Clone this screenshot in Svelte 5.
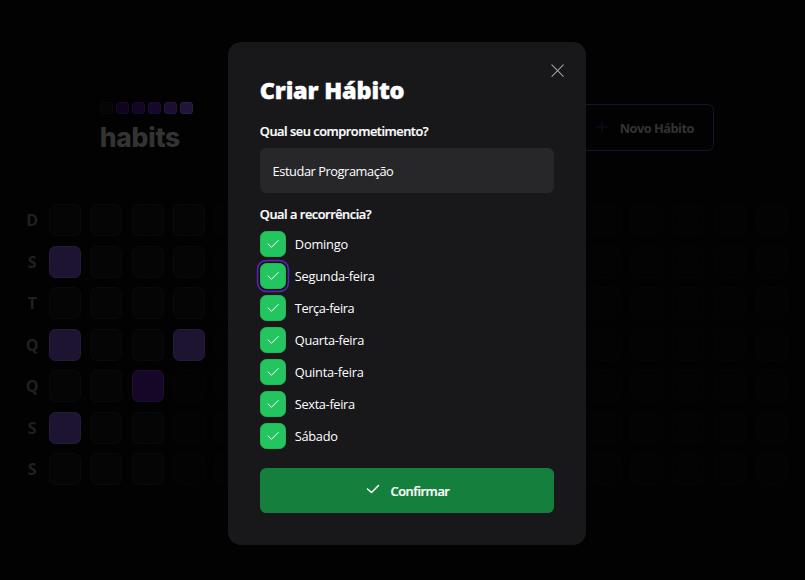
<script>
  const levels = ['l0', 'l1', 'l2', 'l3', 'l4', 'l5'];
  const letters = ['D', 'S', 'T', 'Q', 'Q', 'S', 'S'];
  const days = [
    { name: 'Domingo', tracking: -0.2 },
    { name: 'Segunda-feira', tracking: -0.25 },
    { name: 'Terça-feira', tracking: -0.4 },
    { name: 'Quarta-feira', tracking: -0.32 },
    { name: 'Quinta-feira', tracking: -0.25 },
    { name: 'Sexta-feira', tracking: -0.35 },
    { name: 'Sábado', tracking: -0.3 }
  ];
  const done = { '0-1': 'high', '0-3': 'high', '3-3': 'high', '2-4': 'low', '0-5': 'high' };

  function cellClass(col, row) {
    if (done[`${col}-${row}`]) return done[`${col}-${row}`];
    return col < 3 || (col === 3 && row < 4) ? 'empty' : 'future';
  }
</script>

<div class="page">
  <header>
    <div class="logo">
      <div class="dots">
        {#each levels as l}<i class={l}></i>{/each}
      </div>
      <strong>habits</strong>
    </div>
    <button class="new">
      <svg width="16" height="16" viewBox="0 0 256 256" fill="none" stroke="currentColor" stroke-width="16" stroke-linecap="round"><path d="M40 128H216M128 40V216" /></svg>
      <span>Novo Hábito</span>
    </button>
  </header>
  <main>
    <div class="letters">
      {#each letters as l}<span>{l}</span>{/each}
    </div>
    <div class="grid">
      {#each Array(18) as _, col}
        {#each letters as _, row}<div class={cellClass(col, row)}></div>{/each}
      {/each}
    </div>
  </main>

  <div class="overlay">
    <div class="dialog" role="dialog" aria-labelledby="title">
      <button class="close" aria-label="Fechar">
        <svg width="19.2" height="19.2" viewBox="0 0 256 256" fill="none" stroke="currentColor" stroke-width="14" stroke-linecap="round"><path d="M204 52L52 204M204 204L52 52" /></svg>
      </button>
      <h1 id="title">Criar Hábito</h1>
      <label class="q q1" for="habit">Qual seu comprometimento?</label>
      <input id="habit" value="Estudar Programação" />
      <div class="q q2">Qual a recorrência?</div>
      <div class="days">
        {#each days as day, i}
          <div class="day">
            <span class="box" class:focus={i === 1}>
              <svg width="16" height="16" viewBox="0 0 256 256" fill="none" stroke="currentColor" stroke-width="16" stroke-linecap="round" stroke-linejoin="round"><path d="M212 72L104 180L48 128" /></svg>
            </span>
            <span style:letter-spacing="{day.tracking}px">{day.name}</span>
          </div>
        {/each}
      </div>
      <button class="confirm">
        <svg width="16" height="16" viewBox="0 0 256 256" fill="none" stroke="currentColor" stroke-width="24" stroke-linecap="round" stroke-linejoin="round"><path d="M216 72L104 184L40 128" /></svg>
        <span>Confirmar</span>
      </button>
    </div>
  </div>
</div>

<style>
  :global(body) { background: #020202; overflow: hidden; }
  .page, .page * { box-sizing: border-box; }
  .page {
    position: relative;
    width: 814px;
    height: 580px;
    padding-top: 101.5px;
    background: #020202;
    color: #fff;
    font: 12.8px/20px "Open Sans", "Noto Sans", sans-serif;
  }
  button { font: inherit; margin: 0; padding: 0; border: 0; background: none; color: inherit; }
  svg { display: block; flex: none; }
  header {
    width: 614.4px;
    height: 52px;
    margin: 0 auto;
    display: flex;
    justify-content: space-between;
  }
  .dots { display: flex; gap: 3.2px; }
  .dots i { width: 12.8px; height: 12.8px; border-radius: 3px; border: 1px solid #0a0a0a; }
  .l0 { background: #050505; }
  .dots .l1 { background: #0f0320; border-color: #16092a; }
  .dots .l2 { background: #130524; border-color: #180b30; }
  .dots .l3 { background: #16072b; border-color: #1d0e37; }
  .dots .l4 { background: #1c0d33; border-color: #251640; }
  .dots .l5 { background: #1f1538; border-color: #292042; }
  .logo strong {
    display: block;
    margin-top: 7px;
    font: 800 26.5px/32px Inter, sans-serif;
    letter-spacing: -0.3px;
    color: #333;
  }
  .new {
    display: flex;
    align-items: center;
    gap: 9.6px;
    height: 47px;
    margin-top: 2.5px;
    padding: 0 19.2px;
    border: 1px solid #1b1135;
    border-radius: 6.4px;
    color: #150d28;
  }
  .new span { color: #333; font-weight: 700; letter-spacing: -0.5px; }
  .new svg { margin-top: -2px; }
  main { display: flex; gap: 9.6px; margin: 50.9px 0 0 25.4px; }
  .letters, .grid { display: grid; grid-template-rows: repeat(7, 32px); row-gap: 9.5px; }
  .letters span {
    width: 13.6px;
    line-height: 32px;
    text-align: center;
    font-size: 16px;
    font-weight: 700;
    color: #202022;
  }
  .grid { grid-auto-flow: column; grid-auto-columns: 32px; column-gap: 9.6px; }
  .grid div { border-radius: 6.4px; border: 1px solid #0a0a0a; background: #050505; }
  .grid .future { background: #030303; border-color: #050505; }
  .grid .high { background: #1d1431; border-color: #251d38; }
  .grid .low { background: #160728; border-color: #1d1033; }

  .overlay {
    position: absolute;
    inset: 0;
    display: flex;
    align-items: flex-start;
    justify-content: center;
    padding-top: 42px;
  }
  .dialog {
    position: relative;
    width: 358.4px;
    height: 503.3px;
    padding: 32px;
    border-radius: 12.8px;
    background: #18181b;
    display: flex;
    flex-direction: column;
  }
  .close { position: absolute; top: 18.8px; right: 19.2px; color: #a1a1aa; }
  h1 {
    margin: 0;
    font-size: 23.5px;
    line-height: 32px;
    font-weight: 800;
    letter-spacing: -0.2px;
    white-space: nowrap;
    -webkit-text-stroke: 0.4px #fff;
  }
  .q { font-weight: 600; line-height: 20px; letter-spacing: -0.46px; -webkit-text-stroke: 0.2px #fff; }
  .q1 { margin-top: 15px; }
  .q2 { margin-top: 11px; }
  input {
    width: 100%;
    height: 44.8px;
    margin: 7.4px 0 0;
    padding: 0 12.8px;
    border: 0;
    outline: 0;
    border-radius: 6.4px;
    background: #27272a;
    color: #fff;
    font: inherit;
    letter-spacing: -0.43px;
  }
  .days { display: flex; flex-direction: column; gap: 6px; margin-top: 6.8px; }
  .day { display: flex; align-items: center; gap: 9px; height: 26px; }
  .box {
    width: 26px;
    height: 26px;
    display: flex;
    align-items: center;
    justify-content: center;
    border-radius: 6.4px;
    border: 1px solid #22b758;
    background: #22c55e;
  }
  .focus { box-shadow: 0 0 0 1.6px #111113, 0 0 0 3.2px #5b21b6; }
  .confirm {
    display: flex;
    align-items: center;
    justify-content: center;
    gap: 10px;
    height: 44.8px;
    margin-top: 19.2px;
    border-radius: 6.4px;
    background: #15803d;
    font-weight: 600;
  }
  .confirm span { letter-spacing: -0.45px; padding-top: 1px; -webkit-text-stroke: 0.2px #fff; }
  .confirm svg { margin-top: -3px; }
</style>
